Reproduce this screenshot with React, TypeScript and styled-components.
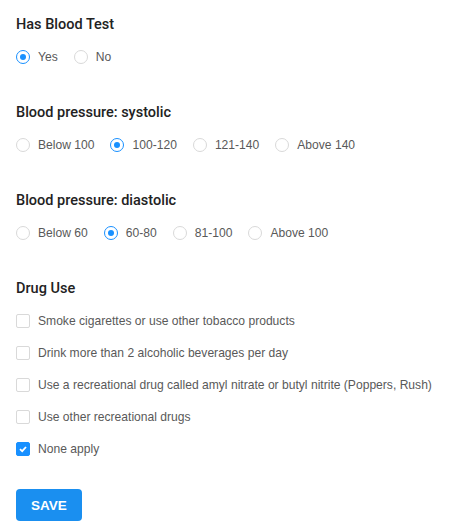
import React, { useState } from "react";
import styled, { createGlobalStyle } from "styled-components";

const GlobalStyle = createGlobalStyle`
  body {
    margin: 0;
    background: #fff;
    font-family: "Liberation Sans", Arial, sans-serif;
  }
`;

const Form = styled.div`
  padding: 15px 16px 0 16px;
  display: flex;
  flex-direction: column;
`;

const Section = styled.div`
  display: flex;
  flex-direction: column;
  gap: 12px;
  margin-bottom: 36px;
`;

const Title = styled.div`
  height: 20px;
  line-height: 20px;
  font-family: Roboto, "Liberation Sans", sans-serif;
  font-size: 14.5px;
  font-weight: 500;
  color: #222;
`;

const RadioRow = styled.div`
  display: flex;
  align-items: center;
  gap: 16px;
  height: 20px;
`;

const CheckList = styled.div`
  display: flex;
  flex-direction: column;
  gap: 12px;
`;

const Option = styled.label`
  display: flex;
  align-items: center;
  gap: 8px;
  height: 20px;
  font-size: 12.1px;
  color: #595959;
  white-space: nowrap;
  cursor: pointer;
`;

const RadioDot = styled.span<{ $on: boolean }>`
  box-sizing: border-box;
  width: 14px;
  height: 14px;
  border-radius: 50%;
  border: 1px solid ${(p) => (p.$on ? "#1890ff" : "#d9d9d9")};
  display: flex;
  align-items: center;
  justify-content: center;
  &::after {
    content: "";
    width: 6px;
    height: 6px;
    border-radius: 50%;
    background: #1890ff;
    display: ${(p) => (p.$on ? "block" : "none")};
  }
`;

const Box = styled.span<{ $on: boolean }>`
  box-sizing: border-box;
  width: 14px;
  height: 14px;
  border-radius: 2px;
  border: 1px solid ${(p) => (p.$on ? "#1890ff" : "#d9d9d9")};
  background: ${(p) => (p.$on ? "#1890ff" : "#fff")};
  display: flex;
  align-items: center;
  justify-content: center;
`;

const SaveButton = styled.button`
  margin-top: -6px;
  width: 66px;
  height: 32px;
  border: none;
  border-radius: 4px;
  background: #1a8ff0;
  color: #fff;
  font-family: "Liberation Sans", Arial, sans-serif;
  font-weight: 700;
  font-size: 13.5px;
  cursor: pointer;
`;

type RadioGroupProps = {
  title: string;
  options: string[];
  value: string;
  onChange: (v: string) => void;
};

function RadioGroup({ title, options, value, onChange }: RadioGroupProps) {
  return (
    <Section>
      <Title>{title}</Title>
      <RadioRow>
        {options.map((o) => (
          <Option key={o} onClick={() => onChange(o)}>
            <RadioDot $on={value === o} />
            {o}
          </Option>
        ))}
      </RadioRow>
    </Section>
  );
}

const drugs = [
  "Smoke cigarettes or use other tobacco products",
  "Drink more than 2 alcoholic beverages per day",
  "Use a recreational drug called amyl nitrate or butyl nitrite (Poppers, Rush)",
  "Use other recreational drugs",
  "None apply",
];

function App() {
  const [blood, setBlood] = useState("Yes");
  const [sys, setSys] = useState("100-120");
  const [dia, setDia] = useState("60-80");
  const [checked, setChecked] = useState<string[]>(["None apply"]);

  const toggle = (d: string) =>
    setChecked((c) => (c.includes(d) ? c.filter((x) => x !== d) : [...c, d]));

  return (
    <Form>
      <GlobalStyle />
      <RadioGroup title="Has Blood Test" options={["Yes", "No"]} value={blood} onChange={setBlood} />
      <RadioGroup
        title="Blood pressure: systolic"
        options={["Below 100", "100-120", "121-140", "Above 140"]}
        value={sys}
        onChange={setSys}
      />
      <RadioGroup
        title="Blood pressure: diastolic"
        options={["Below 60", "60-80", "81-100", "Above 100"]}
        value={dia}
        onChange={setDia}
      />
      <Section>
        <Title>Drug Use</Title>
        <CheckList>
          {drugs.map((d) => {
            const on = checked.includes(d);
            return (
              <Option key={d} onClick={() => toggle(d)}>
                <Box $on={on}>
                  {on && (
                    <svg width="10" height="10" viewBox="0 0 10 10">
                      <path d="M2 5.2 L4.2 7.2 L8 3" fill="none" stroke="#fff" strokeWidth="1.8" />
                    </svg>
                  )}
                </Box>
                {d}
              </Option>
            );
          })}
        </CheckList>
      </Section>
      <SaveButton>SAVE</SaveButton>
    </Form>
  );
}

export default App;
